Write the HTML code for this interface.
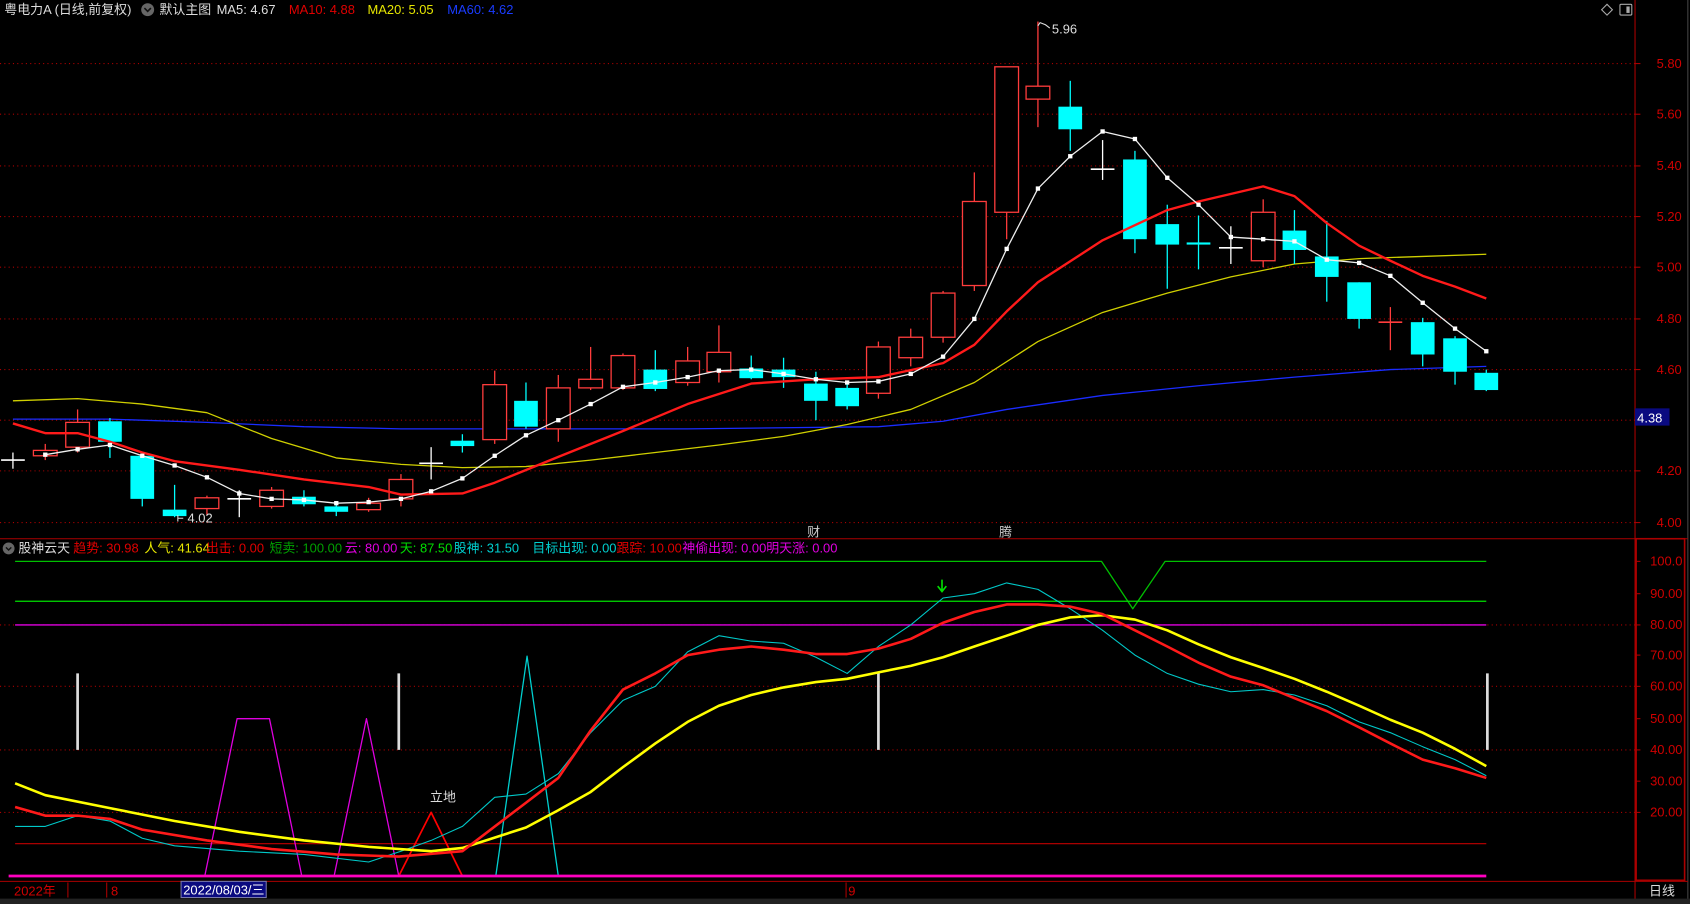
<!DOCTYPE html>
<html><head><meta charset="utf-8"><style>
html,body{margin:0;padding:0;background:#000;width:1690px;height:904px;overflow:hidden}
svg{display:block}
text{font-family:"Liberation Sans","Noto Sans CJK SC",sans-serif;font-size:12px}
</style></head><body>
<svg id="s" width="1690" height="904" viewBox="0 0 1568 839" preserveAspectRatio="none" xmlns="http://www.w3.org/2000/svg">
<rect x="0" y="0" width="1568" height="839" fill="#000"/>
<g id="grid" stroke="#a00" stroke-width="1" stroke-dasharray="1,3"></g>
<line x1="1517" y1="0" x2="1517" y2="839" stroke="#a00"/>
<line x1="1566" y1="0" x2="1566" y2="839" stroke="#444"/>
<line x1="0" y1="500" x2="1566" y2="500" stroke="#a00"/>
<rect x="1518" y="500" width="45" height="317" fill="none" stroke="#a00" stroke-width="1.5"/>
<line x1="0" y1="818" x2="1566" y2="818" stroke="#a00"/>
<rect x="0" y="834" width="1568" height="5" fill="#222"/>
<g id="ticks" stroke="#a00"></g>
<g fill="#d00000" font-size="11.5">
<text x="1537" y="63">5.80</text><text x="1537" y="110">5.60</text><text x="1537" y="158">5.40</text>
<text x="1537" y="205">5.20</text><text x="1537" y="252">5.00</text><text x="1537" y="300">4.80</text>
<text x="1537" y="347">4.60</text><text x="1537" y="441">4.20</text><text x="1537" y="489">4.00</text>
<text x="1531" y="525">100.0</text><text x="1531" y="555">90.00</text><text x="1531" y="584">80.00</text>
<text x="1531" y="612">70.00</text><text x="1531" y="641">60.00</text><text x="1531" y="671">50.00</text>
<text x="1531" y="700">40.00</text><text x="1531" y="729">30.00</text><text x="1531" y="758">20.00</text>
</g>
<rect x="1517" y="379" width="32" height="16" fill="#0a0a80"/>
<text x="1519" y="392" fill="#fff" font-size="11.5">4.38</text>
<g font-size="11.2">
<text x="4" y="13" fill="#ddd">粤电力A (日线,前复权)</text>
<circle cx="137" cy="9" r="6" fill="#666"/><path d="M134 7.5 L137 10.5 L140 7.5" stroke="#111" stroke-width="1.5" fill="none"/>
<text x="148" y="13" fill="#ddd">默认主图</text>
<text x="201" y="13" fill="#ddd">MA5: 4.67</text>
<text x="268" y="13" fill="#e00000">MA10: 4.88</text>
<text x="341" y="13" fill="#e6e600">MA20: 5.05</text>
<text x="415" y="13" fill="#1a3cff">MA60: 4.62</text>
</g>
<path d="M1491 4 L1496 9 L1491 14 L1486 9 Z" fill="none" stroke="#aaa"/>
<rect x="1503" y="4" width="11" height="10" fill="none" stroke="#aaa" rx="1"/><rect x="1509" y="6" width="3" height="6" fill="#aaa"/>
<circle cx="8" cy="509" r="5.5" fill="#666"/><path d="M5.5 508 L8 510.5 L10.5 508" stroke="#111" stroke-width="1.3" fill="none"/>
<g font-size="10.3">
<text x="17" y="513" fill="#ddd">股神云天</text>
<text x="68" y="513" fill="#e00000">趋势: 30.98</text>
<text x="134" y="513" fill="#e6e600">人气: 41.64</text>
<text x="191" y="513" fill="#e00000">出击: 0.00</text>
<text x="250" y="513" fill="#00a000">短卖: 100.00</text>
<text x="320" y="513" fill="#e000e0">云: 80.00</text>
<text x="371" y="513" fill="#00e000">天: 87.50</text>
<text x="421" y="513" fill="#00d0d0">股神: 31.50</text>
<text x="494" y="513" fill="#00d0d0">目标出现: 0.00</text>
<text x="572" y="513" fill="#e00000">跟踪: 10.00</text>
<text x="633" y="513" fill="#e000e0">神偷出现: 0.00</text>
<text x="711" y="513" fill="#e000e0">明天涨: 0.00</text>
</g>
<g id="main"></g>
<g id="ind"></g>
<text x="976" y="31" fill="#ddd" font-size="11.5">5.96</text>
<path d="M963 24 L965 21 L970 23 L974 26" stroke="#ddd" fill="none"/>
<text x="174" y="485" fill="#ddd" font-size="11.5">4.02</text>
<path d="M170 481 L165 481 M165 478 L165 484" stroke="#ddd"/>
<text x="749" y="498" fill="#ccc" font-size="11">财</text>
<text x="927" y="498" fill="#ccc" font-size="11">腾</text>
<text x="399" y="744" fill="#ddd" font-size="11">立地</text>
<path d="M874 538 L874 548 M870 544 L874 549 L878 544" stroke="#00e000" stroke-width="1.5" fill="none"/>
<line x1="63" y1="819" x2="63" y2="833" stroke="#a00"/>
<line x1="99" y1="819" x2="99" y2="833" stroke="#a00"/>
<line x1="785" y1="819" x2="785" y2="833" stroke="#a00"/>
<text x="13" y="831" fill="#d00000" font-size="11.5">2022年</text>
<text x="103" y="831" fill="#d00000" font-size="11.5">8</text>
<rect x="168" y="818" width="79" height="15" fill="#0a0a80" stroke="#77a"/>
<text x="170" y="830" fill="#fff" font-size="11.5">2022/08/03/三</text>
<text x="787" y="831" fill="#d00000" font-size="11.5">9</text>
<text x="1530" y="831" fill="#ddd" font-size="11.5">日线</text>
</svg>
<script>
const NS="http://www.w3.org/2000/svg";
function el(p,t,a){const e=document.createElementNS(NS,t);for(const k in a)e.setAttribute(k,a[k]);p.appendChild(e);return e;}
const g=document.getElementById('grid'),tk=document.getElementById('ticks');
[59,106,154,201,248,296,343,390,437,485].forEach(y=>{el(g,'line',{x1:0,y1:y,x2:1517,y2:y});el(tk,'line',{x1:1517,y1:y,x2:1522,y2:y});});
[580,637,696,754].forEach(y=>el(g,'line',{x1:0,y1:y,x2:1517,y2:y}));
[521,551,580,608,637,667,696,725,754].forEach(y=>el(tk,'line',{x1:1518,y1:y,x2:1522,y2:y}));
const m=document.getElementById('main');
const pl=(p,pts,c,w)=>el(p,'polyline',{points:pts.map(a=>a.join(',')).join(' '),fill:'none',stroke:c,'stroke-width':w,'stroke-linejoin':'round'});
pl(m,[[12,389],[102,389],[192,392],[282,396],[372,398],[459,398],[548,398],[638,398],[727,397],[815,396],[875,391],[934,380],[1023,367],[1112,358],[1201,350],[1290,343],[1379,340]],'#1a2cff',1.2);
pl(m,[[12,372],[72,370],[132,375],[192,383],[252,407],[312,425],[372,431],[429,434],[488,433],[548,427],[608,420],[667,413],[727,405],[786,394],[845,380],[904,355],[963,317],[1023,290],[1083,272],[1142,257],[1201,245],[1261,240],[1320,238],[1379,236]],'#d0d000',1.2);
const C=[[12,427,427,420,435,'w'],[42,418,423,412,427,'r'],[72,392,415,380,420,'r'],[102,391,410,388,425,'c'],[132,423,463,420,470,'c'],[162,473,479,450,480,'c'],[192,462,472,460,478,'r'],[222,463,463,455,480,'w'],[252,455,470,452,472,'r'],[282,461,468,455,470,'c'],[312,470,475,465,479,'c'],[342,467,473,462,475,'r'],[372,445,463,440,470,'r'],[400,430,430,415,445,'w'],[429,409,414,403,420,'c'],[459,357,408,344,412,'r'],[488,372,396,355,398,'c'],[518,360,398,348,410,'r'],[548,352,360,322,362,'r'],[578,330,360,328,362,'r'],[608,343,361,325,363,'c'],[638,335,355,322,358,'r'],[667,327,345,302,355,'r'],[697,342,351,330,352,'c'],[727,343,350,332,360,'c'],[757,356,372,345,390,'c'],[786,360,377,355,380,'c'],[815,322,365,317,370,'r'],[845,313,332,305,340,'r'],[875,272,313,270,318,'r'],[904,187,265,160,270,'r'],[934,62,197,62,222,'r'],[963,80,92,20,118,'r'],[993,99,120,75,140,'c'],[1023,157,157,130,167,'w'],[1053,148,222,140,235,'c'],[1083,208,227,190,268,'c'],[1112,225,227,200,250,'c'],[1142,230,230,210,245,'w'],[1172,197,242,185,248,'r'],[1201,214,232,195,245,'c'],[1231,238,257,205,280,'c'],[1261,262,296,262,305,'c'],[1290,299,299,285,325,'r'],[1320,299,329,295,340,'c'],[1350,314,345,312,357,'c'],[1379,346,362,343,363,'c']];
C.forEach(([x,o,c,h,l,t])=>{const col=t=='r'?'#ff3c3c':t=='c'?'#00ffff':'#fff';
 el(m,'line',{x1:x,y1:h,x2:x,y2:l,stroke:col,'stroke-width':1.2});
 if(o==c){el(m,'line',{x1:x-11,y1:o,x2:x+11,y2:o,stroke:col,'stroke-width':1.5});}
 else if(t=='r'){el(m,'rect',{x:x-11,y:o,width:22,height:c-o,fill:'#000',stroke:col,'stroke-width':1.2});}
 else el(m,'rect',{x:x-11,y:o,width:22,height:c-o,fill:col});});
pl(m,[[12,393],[42,402],[72,402],[102,410],[132,420],[162,428],[222,436],[282,445],[342,452],[372,459],[429,458],[459,448],[518,424],[578,400],[638,375],[697,356],[757,352],[815,350],[875,337],[904,320],[934,289],[963,262],[1023,223],[1083,195],[1112,187],[1172,173],[1201,182],[1231,207],[1261,228],[1290,242],[1320,256],[1350,266],[1379,277]],'#ff1a1a',2.2);
const ma5=[[42,422],[72,417],[102,413],[132,423],[162,432],[192,443],[222,458],[252,463],[282,464],[312,467],[342,466],[372,463],[400,456],[429,444],[459,423],[488,404],[518,390],[548,375],[578,359],[608,355],[638,350],[667,344],[697,343],[727,347],[757,352],[786,355],[815,354],[845,347],[875,331],[904,296],[934,231],[963,175],[993,145],[1023,122],[1053,129],[1083,165],[1112,190],[1142,220],[1172,222],[1201,224],[1231,241],[1261,244],[1290,256],[1320,281],[1350,305],[1379,326]];
pl(m,ma5,'#eee',1.2);ma5.forEach(([x,y])=>el(m,'rect',{x:x-2,y:y-2,width:4,height:4,fill:'#fff'}));
const d=document.getElementById('ind');
pl(d,[[14,521],[1022,521],[1051,565],[1081,521],[1379,521]],'#00c000',1.2);
el(d,'line',{x1:14,y1:558,x2:1379,y2:558,stroke:'#00e000','stroke-width':1.2});
el(d,'line',{x1:14,y1:580,x2:1379,y2:580,stroke:'#e000e0','stroke-width':1.2});
el(d,'line',{x1:14,y1:783,x2:1379,y2:783,stroke:'#c00000','stroke-width':1});
[72,370,815,1380].forEach(x=>el(d,'line',{x1:x,y1:625,x2:x,y2:696,stroke:'#ddd','stroke-width':2.5}));
pl(d,[[190,813],[220,667],[250,667],[280,813]],'#e000e0',1.2);
pl(d,[[310,813],[340,667],[370,813]],'#e000e0',1.2);
pl(d,[[460,813],[489,609],[518,813]],'#00d0d0',1.2);
pl(d,[[370,813],[400,754],[429,813]],'#ff0000',1.6);
pl(d,[[14,767],[42,767],[72,757],[102,762],[132,778],[162,785],[222,790],[282,793],[342,800],[372,790],[400,780],[429,767],[459,740],[488,737],[518,718],[548,680],[578,650],[608,637],[638,605],[667,590],[697,595],[727,597],[757,610],[786,625],[815,600],[845,580],[875,555],[904,551],[934,541],[963,547],[993,565],[1023,585],[1053,608],[1083,625],[1112,635],[1142,642],[1172,640],[1201,645],[1231,655],[1261,670],[1290,680],[1320,693],[1350,705],[1379,720]],'#00c8c8',1);
pl(d,[[14,727],[42,738],[102,750],[162,762],[222,772],[282,780],[342,786],[400,790],[429,787],[488,768],[518,752],[548,735],[578,712],[608,690],[638,670],[667,655],[697,645],[727,638],[757,633],[786,630],[815,624],[845,618],[875,610],[904,600],[934,590],[963,580],[993,573],[1023,571],[1053,575],[1083,585],[1112,598],[1142,610],[1172,620],[1201,630],[1231,642],[1261,655],[1290,668],[1320,680],[1350,695],[1379,711]],'#ffff00',2.4);
pl(d,[[14,749],[42,757],[72,757],[102,760],[132,770],[192,780],[252,788],[312,793],[370,795],[429,790],[488,745],[518,722],[548,678],[578,640],[608,625],[638,608],[667,603],[697,600],[727,603],[757,607],[786,607],[815,602],[845,593],[875,578],[904,568],[934,561],[963,561],[993,563],[1023,570],[1053,585],[1083,600],[1112,615],[1142,628],[1172,636],[1201,648],[1231,660],[1261,675],[1290,690],[1320,705],[1350,713],[1379,722]],'#ff1a1a',2.4);
el(d,'line',{x1:8,y1:813,x2:1379,y2:813,stroke:'#ff00c0','stroke-width':2.5});
</script>
</body></html>
